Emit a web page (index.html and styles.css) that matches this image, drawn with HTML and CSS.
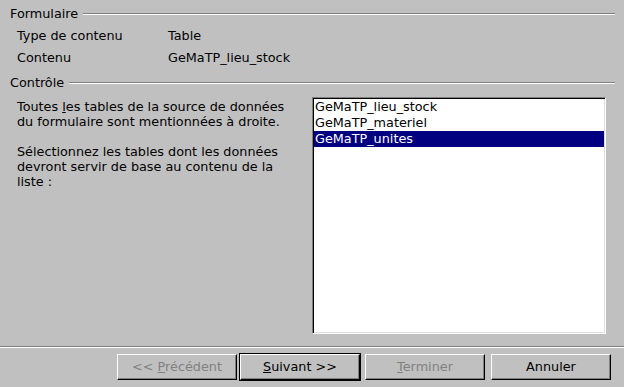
FILE: index.html
```html
<!DOCTYPE html>
<html lang="fr">
<head>
  <meta charset="UTF-8">
  <title>Assistant Zone de liste</title>
  <link rel="stylesheet" href="styles.css">
</head>
<body>

  <div class="dialog">
    <div class="group-title"><span>Formulaire</span></div>
    <div class="info-row info-first">
      <span class="info-label">Type de contenu</span>
      <span>Table</span>
    </div>
    <div class="info-row">
      <span class="info-label">Contenu</span>
      <span>GeMaTP_lieu_stock</span>
    </div>

    <div class="group-title group-second"><span>Contrôle</span></div>
    <div class="control-body">
      <div class="hint">
        <p>Toutes <u>l</u>es tables de la source de données du formulaire sont mentionnées à droite.</p>
        <p class="hint-gap">Sélectionnez les tables dont les données devront servir de base au contenu de la liste :</p>
      </div>
      <div class="listbox">
        <div class="list-item">GeMaTP_lieu_stock</div>
        <div class="list-item">GeMaTP_materiel</div>
        <div class="list-item selected">GeMaTP_unites</div>
      </div>
    </div>

    <!-- bottom button row -->
    <div class="separator"></div>
    <div class="buttons">
      <button class="btn" disabled>&lt;&lt; <u>P</u>récédent</button>
      <button class="btn btn-default"><u>S</u>uivant &gt;&gt;</button>
      <button class="btn btn-finish" disabled><u>T</u>erminer</button>
      <button class="btn btn-cancel">Annuler</button>
    </div>
  </div>

</body>
</html>
```

FILE: styles.css
```css
body {
  margin: 0;
  font-family: "DejaVu Sans", sans-serif;
  font-size: 12.8px;
  color: #000;
  background-color: #c0c0c0;
}
.dialog {
  width: 624px;
  height: 387px;
  overflow: hidden;
}
u {
  text-decoration: underline;
  text-underline-offset: 1px;
}
/* group headings with etched line */
.group-title {
  display: flex;
  align-items: center;
  margin: 6px 9px 0 10px;
  height: 16px;
  line-height: 16px;
}
.group-title::after {
  content: "";
  flex: 1;
  height: 1px;
  margin-left: 5px;
  background: #808080;
  border-bottom: 1px solid #fff;
}
.group-second {
  margin-top: 6px;
}
.info-row {
  display: flex;
  padding-left: 17px;
  height: 22px;
  line-height: 22px;
}
.info-first {
  margin-top: 3px;
}
.info-label {
  width: 151px;
}
.control-body {
  display: flex;
  margin-top: 6px;
  padding-left: 17px;
  height: 237px;
}
.hint {
  width: 295px;
  padding-top: 2px;
  line-height: 15px;
}
.hint p {
  margin: 0;
  width: 276px;
}
.hint-gap {
  margin-top: 15px !important;
}
.listbox {
  width: 290px;
  height: 233px;
  padding: 1px;
  background: #fff;
  border: 1px solid;
  border-color: #808080 #fff #fff #808080;
  box-shadow: inset 1px 1px #000, inset -1px -1px #dfdfdf;
}
.list-item {
  height: 16px;
  line-height: 16px;
  padding-left: 1px;
  white-space: nowrap;
}
.list-item.selected {
  background: #000080;
  color: #fff;
}
.separator {
  margin-top: 12px;
  height: 1px;
  background: #808080;
  border-bottom: 1px solid #fff;
}
.buttons {
  display: flex;
  margin-top: 6px;
  padding-left: 117px;
}
.btn {
  width: 120px;
  height: 26px;
  padding: 0 0 1px;
  font-family: "DejaVu Sans", sans-serif;
  font-size: 12.8px;
  color: #000;
  background: #c0c0c0;
  border: 1px solid;
  border-color: #fff #000 #000 #fff;
  box-shadow: inset -1px -1px #808080;
  border-radius: 0;
}
.btn:disabled {
  color: #808080;
}
.btn-default {
  margin-left: 3px;
  outline: 1px solid #000;
}
.btn-finish {
  margin-left: 5px;
}
.btn-cancel {
  margin-left: 6px;
}
```
